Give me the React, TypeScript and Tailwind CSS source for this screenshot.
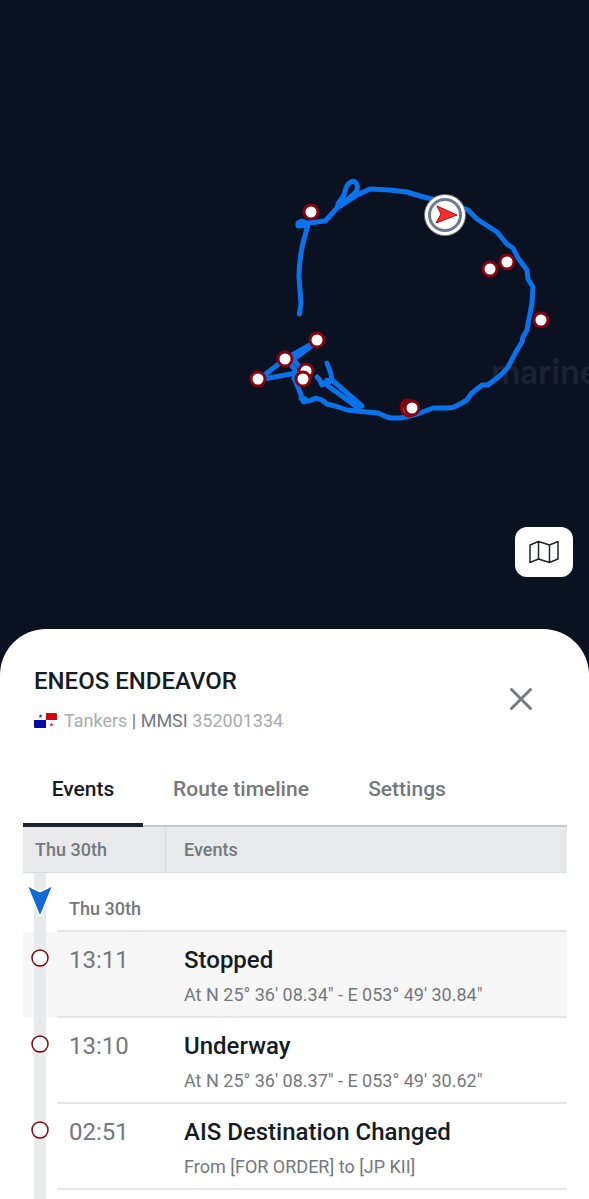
import { useState } from "react";

const stops = [
  { x: 311, y: 212 },
  { x: 507, y: 262 },
  { x: 490, y: 269 },
  { x: 541, y: 320 },
  { x: 317, y: 340 },
  { x: 285, y: 359 },
  { x: 258, y: 379 },
  { x: 306, y: 371 },
  { x: 303, y: 379 },
  { x: 408, y: 407 },
  { x: 409, y: 409 },
  { x: 412, y: 408 },
];

const tabs = [
  { id: "events", label: "Events", width: "w-[120px]" },
  { id: "route", label: "Route timeline", width: "w-[196px]" },
  { id: "settings", label: "Settings", width: "w-[136px]" },
];

const events = [
  {
    time: "13:11",
    title: "Stopped",
    detail: "At N 25° 36' 08.34\" - E 053° 49' 30.84\"",
    selected: true,
  },
  {
    time: "13:10",
    title: "Underway",
    detail: "At N 25° 36' 08.37\" - E 053° 49' 30.62\"",
    selected: false,
  },
  {
    time: "02:51",
    title: "AIS Destination Changed",
    detail: "From [FOR ORDER] to [JP KII]",
    selected: false,
  },
];

function RouteMap() {
  return (
    <svg viewBox="0 0 589 629" className="block h-auto w-full" role="img" aria-label="Vessel route">
      <text x="491" y="384" fill="#1b2231" fontSize="35" className="font-['Lato'] font-bold">
        marine
      </text>
      <g fill="none" stroke="#0a72eb" strokeWidth="5" strokeLinecap="round" strokeLinejoin="round">
        <path d="M299.500 314L301 303L299 277C299 262 301 252 303 243L308 225L298 226L298 223L302 221L308 223L325 221L329 217L337 208L338 204L344 195C346 187 347 184 351 182C356 179 360 187 355 193L339 207L357 195L370 189L390 190L407 192L420 196L440 201L468 210L477 219L497 232L507 244L513 248L518 258L527 270L528 279L533 287L532 303L530 314L527 330L523 337L522 342L517 350L508 367Q501 376 493 381L488 385L482 385L477 389L471 394L467 400L462 403L458 405Q454 408 446 408L433 408L420 413L406 417L400 418L391 418L387 417L378 413L367 412L347 410L335 406L327 404L322 400L316 398L309 401L303 401L300 392L294 378L295 370L290 363" />
        <path d="M307 371L258 380L285 359L317 341L293 359L303 371" />
        <path d="M301 398L305 399L304 402" />
        <path d="M327 363L331 374L332 380L362 406L357 407L324 383" />
        <path d="M332 380L326 382L322 385L319 379L317 377" />
      </g>
      <path d="M317 338L319 343L301 357L294 361L290 357Z M325 378L333 378L331 384L325 387Z" fill="#0a72eb" />
      {stops.map((s, i) => (
        <circle key={i} cx={s.x} cy={s.y} r="7" fill="#fff" stroke="#85040d" strokeWidth="3" />
      ))}
      <circle cx="445" cy="215" r="21" fill="#747b85" />
      <circle cx="445" cy="215" r="20" fill="#fff" />
      <circle cx="445" cy="215" r="15.500" fill="#fff" stroke="#6b7b90" strokeWidth="3" />
      <path d="M437 206L457 215L436 223L441 214Z" fill="#f2332d" stroke="#a80d12" strokeWidth="1" />
    </svg>
  );
}

function MapIcon() {
  return (
    <svg viewBox="0 0 30 24" className="h-6 w-[30px]" fill="none" stroke="#20252b" strokeWidth="1.500" strokeLinejoin="round" aria-hidden="true">
      <path d="M1 5L9.500 1.500L20.500 5L29 1.500V19L20.500 22.500L9.500 19L1 22.500ZM9.500 1.500V19M20.500 5V22.500" />
    </svg>
  );
}

function PanamaFlag() {
  return (
    <svg viewBox="0 0 24 16" className="h-4 w-6 shrink-0" role="img" aria-label="Panama">
      <path d="M12 0h10q1 0 1 1v6H12z" fill="#d80011" />
      <path d="M0 7h12v8H1q-1 0-1-1z" fill="#0a0aa5" />
      <path d="M6.500 1l.5 1.500h1.600l-1.300 1 .5 1.500-1.300-.9L5.200 5l.5-1.500-1.300-1H6z" fill="#1a1a9c" />
      <path d="M17.500 9.500l.5 1.500h1.600l-1.300 1 .5 1.500-1.300-.9-1.300.9.5-1.500-1.300-1H17z" fill="#c91a24" />
    </svg>
  );
}

function Rail({ marker }: { marker?: "stop" | "ship" }) {
  return (
    <div className="relative ml-[11px] h-full w-3 bg-[#e8e9eb]">
      {marker === "stop" && (
        <svg viewBox="0 0 20 20" className="absolute top-4 left-1/2 size-5 max-w-none -translate-x-1/2" aria-hidden="true">
          <circle cx="10" cy="10" r="8" fill="#fff" stroke="#85040d" strokeWidth="1.500" />
        </svg>
      )}
      {marker === "ship" && (
        <svg viewBox="0 0 26 32" className="absolute top-3 left-1/2 h-8 w-[26px] max-w-none -translate-x-1/2" aria-hidden="true">
          <path d="M1.500 2L13 7.500L24.500 2L13 30Z" fill="#1269d3" stroke="#fff" strokeWidth="2" strokeLinejoin="round" paintOrder="stroke" />
        </svg>
      )}
    </div>
  );
}

function EventsTable() {
  return (
    <table className="w-full table-fixed border-separate border-spacing-0 text-left">
      <colgroup>
        <col className="w-[34px]" />
        <col className="w-[109px]" />
        <col />
      </colgroup>
      <thead>
        <tr className="h-[46px] bg-[#e8e9eb] text-[18px] text-[#75787d]">
          <th colSpan={2} className="border-r border-b border-[#dadbdd] pl-3 font-medium">
            Thu 30th
          </th>
          <th className="border-b border-[#dadbdd] pl-[18px] font-medium">Events</th>
        </tr>
      </thead>
      <tbody>
        <tr className="h-[59px]">
          <td className="h-[59px] p-0">
            <Rail marker="ship" />
          </td>
          <td colSpan={2} className="border-b-2 border-[#e4e5e6] pt-[14px] pl-3 text-[18px] font-medium text-[#75787d]">
            Thu 30th
          </td>
        </tr>
        {events.map((event) => (
          <tr key={event.time} className={event.selected ? "bg-[#f7f7f7]" : "bg-white"}>
            <td className="h-[86px] p-0">
              <Rail marker="stop" />
            </td>
            <td className="border-b-2 border-[#e4e5e6] pt-3 pl-3 align-top text-2xl text-[#75787d]">
              {event.time}
            </td>
            <td className="border-b-2 border-[#e4e5e6] pt-3 pl-[18px] align-top">
              <p className="text-2xl font-medium text-[#161c24]">{event.title}</p>
              <p className="mt-[7px] text-[18px] leading-6 text-[#75787d]">{event.detail}</p>
            </td>
          </tr>
        ))}
        <tr>
          <td className="h-[10px] p-0">
            <Rail />
          </td>
        </tr>
      </tbody>
    </table>
  );
}

export default function App() {
  const [activeTab, setActiveTab] = useState("events");

  return (
    <main className="min-h-screen bg-[#0a1222] font-['Roboto',sans-serif]">
      <section className="relative">
        <RouteMap />
        <button
          type="button"
          aria-label="Map layers"
          className="absolute right-4 bottom-[52px] flex h-[50px] w-[58px] items-center justify-center rounded-xl bg-white"
        >
          <MapIcon />
        </button>
      </section>

      <section className="rounded-t-[46px] bg-white pr-[22px] pl-[23px]">
        <header className="flex items-center justify-between pt-9 pr-[34px] pl-[11px]">
          <div>
            <h1 className="text-2xl leading-8 font-medium text-[#161c24]">ENEOS ENDEAVOR</h1>
            <p className="mt-3 flex items-center gap-[6px] text-[18px] leading-6 text-[#a9abae]">
              <PanamaFlag />
              <span>
                Tankers <span className="text-[#75787d]">| MMSI</span> 352001334
              </span>
            </p>
          </div>
          <button type="button" aria-label="Close" className="text-[#75787d]">
            <svg viewBox="0 0 24 24" className="size-6" fill="none" stroke="currentColor" strokeWidth="3" strokeLinecap="round">
              <path d="M2.500 2.500L21.500 21.500M21.500 2.500L2.500 21.500" />
            </svg>
          </button>
        </header>

        <div role="tablist" className="mt-5 flex border-b-2 border-[#c5c7c9]">
          {tabs.map((tab) => (
            <button
              key={tab.id}
              type="button"
              role="tab"
              aria-selected={activeTab === tab.id}
              onClick={() => setActiveTab(tab.id)}
              className={`-mb-[2px] h-[74px] border-b-4 pt-1 text-[21px] font-medium whitespace-nowrap ${tab.width} ${
                activeTab === tab.id ? "border-[#1b222b] text-[#161c24]" : "border-transparent text-[#75787d]"
              }`}
            >
              {tab.label}
            </button>
          ))}
        </div>

        <EventsTable />
      </section>
    </main>
  );
}
